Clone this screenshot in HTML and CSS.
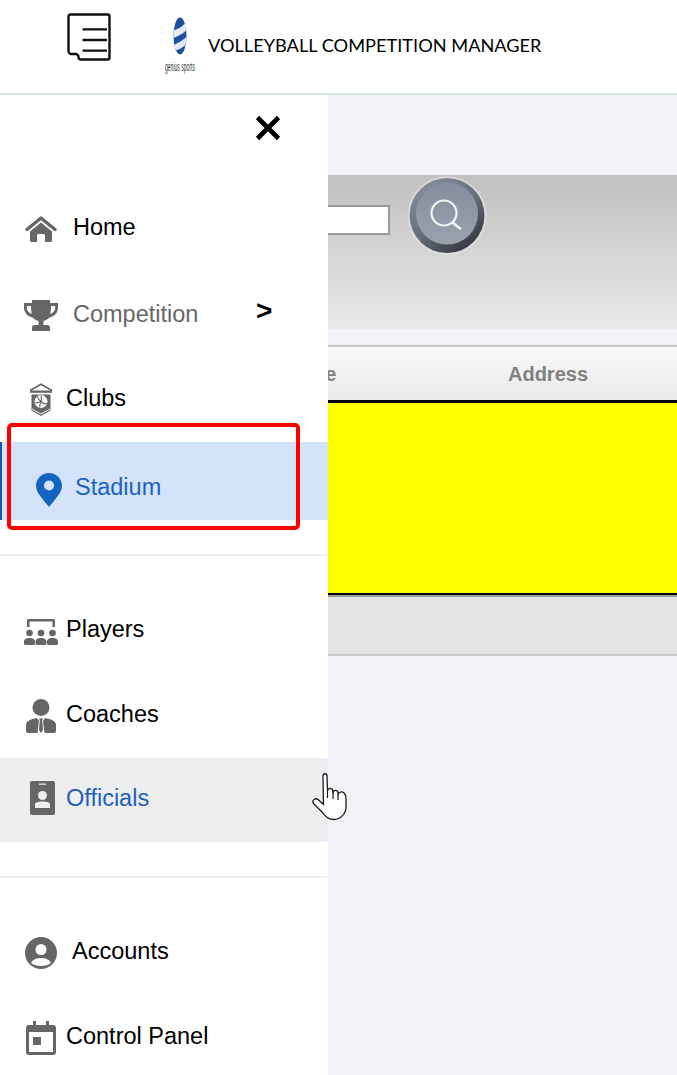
FILE: index.html
```html
<!DOCTYPE html>
<html lang="en">
<head>
<meta charset="utf-8">
<title>Volleyball Competition Manager</title>
<link rel="stylesheet" href="styles.css">
</head>
<body>
<header class="topbar">
  <svg class="burger" viewBox="0 0 44 48" aria-hidden="true">
    <path d="M3.500 1.500H40.500a2 2 0 0 1 2 2V44.500a2 2 0 0 1-2 2H14a2.500 2.500 0 0 1-2.500-2.500a3 3 0 0 0-3-3H4.500a3 3 0 0 1-3-3V3.500a2 2 0 0 1 2-2Z" fill="none" stroke="#111" stroke-width="2.400"/>
    <path d="M15.500 16.300H40M15.500 27H40M15.500 37.700H40" stroke="#111" stroke-width="2.300"/>
  </svg>
  <svg class="logo" viewBox="0 0 32 56" aria-hidden="true">
    <ellipse cx="16" cy="19" rx="6.500" ry="18.500" fill="#1f4fa0"/>
    <path d="M10 13C14 12.500 19 9 22 5.500L22.500 13C19 17 14 19 9.600 21ZM10 28C14 26 19 23 22.500 20L21.500 28C18 31 14 33 12 33.500Z" fill="#e4eaf3"/>
    <text x="1" y="54" font-size="12" textLength="30" lengthAdjust="spacingAndGlyphs" class="logo-text">genius sports</text>
  </svg>
  <span class="app-title">VOLLEYBALL COMPETITION MANAGER</span>
</header>

<div class="app">
  <main class="content">
    <section class="search-panel">
      <input class="search-input" type="text" aria-label="Search">
      <svg class="search-btn" viewBox="0 0 80 80" aria-hidden="true">
        <defs>
          <linearGradient id="ring" x1="0.200" y1="0.100" x2="0.800" y2="0.950">
            <stop offset="0" stop-color="#828b9b"/>
            <stop offset="0.500" stop-color="#666d79"/>
            <stop offset="1" stop-color="#33363c"/>
          </linearGradient>
          <linearGradient id="face" x1="0" y1="0" x2="0" y2="1">
            <stop offset="0" stop-color="#858e9e"/>
            <stop offset="1" stop-color="#9aa2af"/>
          </linearGradient>
        </defs>
        <circle cx="40" cy="40" r="39.500" fill="#dcdcdc"/>
        <circle cx="40" cy="39.500" r="37.500" fill="url(#ring)"/>
        <circle cx="40" cy="37.500" r="31" fill="url(#face)"/>
        <circle cx="37" cy="37" r="12.500" fill="none" stroke="#f4f4f4" stroke-width="2.200"/>
        <path d="M45.500 46.500L53 52.500" stroke="#f4f4f4" stroke-width="2.800" stroke-linecap="round"/>
      </svg>
    </section>
    <section class="grid">
      <div class="grid-head">
        <span></span>
        <span>Stadium Name</span>
        <span>Address</span>
      </div>
      <div class="grid-body"></div>
      <div class="grid-foot"></div>
    </section>
  </main>

  <aside class="drawer">
    <div class="drawer-top">
      <svg class="close" viewBox="0 0 26 26" aria-hidden="true"><path d="M2.500 2.500L23.500 23.500M23.500 2.500L2.500 23.500" stroke="#000" stroke-width="4.600"/></svg>
    </div>
    <nav>
      <a class="row row-home">
        <svg class="ico ico-home" viewBox="0 0 32 26" aria-hidden="true"><path d="M2 13.500L16 2L30 13.500" fill="none" stroke="#666" stroke-width="3.400" stroke-linecap="round" stroke-linejoin="round"/><path d="M16 6.500L27 15.500V24.500a1.500 1.500 0 0 1-1.500 1.500H20V19.500a1.500 1.500 0 0 0-1.500-1.500h-5A1.500 1.500 0 0 0 12 19.500V26H6.500A1.500 1.500 0 0 1 5 24.500V15.500Z" fill="#666"/></svg>
        <span class="label">Home</span>
      </a>
      <a class="row row-comp">
        <svg class="ico ico-trophy" viewBox="0 0 34 31" aria-hidden="true"><path d="M8 0H26V3H34V8C34 13.500 29 17 25.500 17.500C23.500 19.500 21.500 20.500 19.500 21V25H23.500C25 25 26 26 26 27.500V31H8V27.500C8 26 9 25 10.500 25H14.500V21C12.500 20.500 10.500 19.500 8.500 17.500C5 17 0 13.500 0 8V3H8ZM2.800 6V8C2.800 10.500 5 13 7.800 14C7.200 11.500 7 9 7 6ZM31.200 6H27C27 9 26.800 11.500 26.200 14C29 13 31.200 10.500 31.200 8Z" fill="#666"/></svg>
        <span class="label muted">Competition</span>
        <span class="chevron">&gt;</span>
      </a>
      <a class="row row-clubs">
        <svg class="ico ico-club" viewBox="0 0 24 34" aria-hidden="true"><path d="M1 7.500L12 1.200L23 7.500" fill="none" stroke="#666" stroke-width="1.700"/><path d="M1 7.500H23V9.800H1Z" fill="#666"/><path d="M2.500 11.500H21.500V27.500L12 33L2.500 27.500Z" fill="#666"/><path d="M3 26L12 31L21 26" fill="none" stroke="#fff" stroke-width="1"/><circle cx="12" cy="18.500" r="6.500" fill="#fff"/><path d="M12 12.500C12.500 15 12.500 17 12 18.500C10 19.500 8 20 6.200 19.500M12 18.500C13.500 20 16 21 18 20.500M12 18.500C11 20.500 10.500 22.500 11 24.500M8 13.800C9 15.500 10.500 17.500 12 18.500" fill="none" stroke="#666" stroke-width="1.100"/></svg>
        <span class="label">Clubs</span>
      </a>
      <a class="row row-active">
        <svg class="ico ico-pin" viewBox="0 0 26 34" aria-hidden="true"><path d="M13 0C5.800 0 0 5.700 0 12.800C0 20 8 27.500 13 34C18 27.500 26 20 26 12.800C26 5.700 20.200 0 13 0Z" fill="#1565c0"/><circle cx="13" cy="12.500" r="5" fill="#d2e3fa"/></svg>
        <span class="label link">Stadium</span>
        <span class="callout"></span>
      </a>
      <hr class="divider">
      <a class="row row-players">
        <svg class="ico ico-players" viewBox="0 0 34 27" aria-hidden="true"><path d="M3 9V2.500A1.500 1.500 0 0 1 4.500 1H29.500A1.500 1.500 0 0 1 31 2.500V9H28.500V3.500H5.500V9Z" fill="#666"/><g fill="#666"><circle cx="5.500" cy="15" r="3.300"/><circle cx="17" cy="15" r="3.300"/><circle cx="28.500" cy="15" r="3.300"/><path d="M0 25.500V24C0 21 2 20 5.500 20S11 21 11 24V25.500A1.500 1.500 0 0 1 9.500 27H1.500A1.500 1.500 0 0 1 0 25.500ZM11.500 25.500V24C11.500 21 13.500 20 17 20S22.500 21 22.500 24V25.500A1.500 1.500 0 0 1 21 27H13A1.500 1.500 0 0 1 11.500 25.500ZM23 25.500V24C23 21 25 20 28.500 20S34 21 34 24V25.500A1.500 1.500 0 0 1 32.500 27H24.500A1.500 1.500 0 0 1 23 25.500Z"/></g></svg>
        <span class="label">Players</span>
      </a>
      <a class="row row-coach">
        <svg class="ico ico-coach" viewBox="0 0 30 34" aria-hidden="true"><circle cx="15" cy="8.500" r="8.500" fill="#666"/><path d="M0 32V26C0 22 5 20 11 19L13 22L11.500 34H2A2 2 0 0 1 0 32ZM30 32V26C30 22 25 20 19 19L17 22L18.500 34H28A2 2 0 0 0 30 32ZM13 19.500H17L16.200 21.500L17 31L15 34L13 31L13.800 21.500Z" fill="#666"/></svg>
        <span class="label">Coaches</span>
      </a>
      <a class="row row-hover">
        <svg class="ico ico-badge" viewBox="0 0 25 34" aria-hidden="true"><path d="M2 0H23A2 2 0 0 1 25 2V32A2 2 0 0 1 23 34H2A2 2 0 0 1 0 32V2A2 2 0 0 1 2 0Z" fill="#666"/><path d="M9 2.500H16V3.800H9Z" fill="#eee"/><circle cx="12.500" cy="14.500" r="4.500" fill="#eee"/><path d="M5 27V23.500C5 21.500 7.500 20.500 12.500 20.500S20 21.500 20 23.500V27Z" fill="#eee"/></svg>
        <span class="label link">Officials</span>
      </a>
      <hr class="divider">
      <a class="row row-account">
        <svg class="ico ico-account" viewBox="0 0 32 32" aria-hidden="true"><circle cx="16" cy="16" r="16" fill="#666"/><circle cx="16" cy="12.500" r="5.500" fill="#fff"/><path d="M6 26C8 22 12 21 16 21S24 22 26 26C23.500 28 20 29 16 29S8.500 28 6 26Z" fill="#fff"/></svg>
        <span class="label">Accounts</span>
      </a>
      <a class="row row-panel">
        <svg class="ico ico-cal" viewBox="0 0 30 34" aria-hidden="true"><path d="M7 0H10V4H20V0H23V4H27A3 3 0 0 1 30 7V31A3 3 0 0 1 27 34H3A3 3 0 0 1 0 31V7A3 3 0 0 1 3 4H7ZM3 11V31H27V11Z" fill="#666"/><path d="M7 16H15V24H7Z" fill="#666"/></svg>
        <span class="label">Control Panel</span>
      </a>
    </nav>
  </aside>

  <svg class="hand" viewBox="0 0 40 52" aria-hidden="true">
    <path d="M13 6C13 3 17 3 17 6L17.500 21C18 17.500 22.500 17.500 22.800 21L23 23C23.500 19.500 27.500 19.500 28 23V25C28.500 22 32 21 34 23C35.500 24.500 36 26 36 28V37C36 44 30 49.500 24 49.500C17 49.500 15 45 11 41L3.500 33.500C1.500 30.500 5 27.500 8 29.500L13.500 34.500Z" fill="#fff" stroke="#1a1a1a" stroke-width="1.300" stroke-linejoin="round"/>
    <path d="M17.500 21V28M23 23V29M28 25V30" stroke="#1a1a1a" stroke-width="1.200" fill="none"/>
  </svg>
</div>
</body>
</html>
```

FILE: styles.css
```css
* { box-sizing: border-box; }
html, body { margin: 0; height: 100%; }
body {
  overflow: hidden;
  font-family: "Liberation Sans", Arial, sans-serif;
  background: #f2f3f8;
  display: flex;
  flex-direction: column;
}
.topbar {
  height: 95px;
  flex: none;
  background: #fff;
  border-bottom: 2px solid #d5e3e1;
  display: flex;
  align-items: flex-start;
  padding-left: 67px;
}
.burger { width: 44px; height: 48px; margin-top: 13px; flex: none; }
.logo { width: 32px; height: 56px; margin: 17px 0 0 53px; flex: none; overflow: visible; }
.logo-text { font-family: "Liberation Sans", sans-serif; fill: #333; }
.app-title {
  margin: 33px 0 0 12px;
  font-family: Lato, sans-serif;
  font-size: 18.200px;
  line-height: 24px;
  color: #000;
  white-space: nowrap;
}
.app { position: relative; flex: 1; min-height: 0; }
.content { padding-top: 80px; }
.search-panel {
  height: 154px;
  background: linear-gradient(#c0c0c0, #e9e9e9);
  display: flex;
  align-items: flex-start;
  padding-left: 100px;
}
.search-input {
  width: 290px;
  height: 30px;
  margin-top: 30px;
  border: 2px solid #999;
  background: #fff;
  padding: 0;
}
.search-btn { width: 80px; height: 80px; margin: 1px 0 0 17px; flex: none; }
.grid { margin-top: 16px; }
.grid-head {
  height: 58px;
  padding-top: 2px;
  border-top: 2px solid #c8c8c8;
  border-bottom: 3px solid #000;
  background: linear-gradient(#f9f9f9, #e9e9e9);
  display: grid;
  grid-template-columns: 115px 304px 1fr;
  align-items: center;
  text-align: center;
  font-size: 20px;
  font-weight: 700;
  color: #808080;
  white-space: nowrap;
}
.grid-body { height: 190px; background: #ff0; }
.grid-foot {
  height: 63px;
  border-top: 2px solid #000;
  background: #e4e4e4;
  box-shadow: inset 0 2px 0 #999;
  border-bottom: 2px solid #c8c8c8;
}
.drawer {
  position: absolute;
  left: 0; top: 0; bottom: 0;
  width: 328px;
  background: #fff;
  overflow: hidden;
}
.drawer-top {
  height: 90px;
  display: flex;
  justify-content: flex-end;
  align-items: flex-start;
  padding: 20px 47px 0 0;
}
.close { width: 26px; height: 26px; }
.row {
  display: flex;
  align-items: center;
  height: 84px;
  padding-left: 24px;
  font-size: 23.500px;
  color: #000;
  position: relative;
}
.label { line-height: 28px; white-space: nowrap; }
.muted { color: #666; }
.link { color: #1f5fbf; }
.chevron {
  position: absolute;
  left: 256px;
  top: 25px;
  font-weight: 700;
  font-size: 28px;
  line-height: 28px;
  color: #000;
}
.ico { flex: none; display: block; }
.ico-home { width: 32px; height: 26px; margin: 4px 16px 0 1px; }
.ico-trophy { width: 34px; height: 31px; margin: 3px 15px 0 0; }
.ico-club { width: 24px; height: 34px; margin: 4px 13px 0 5px; }
.ico-pin { width: 26px; height: 34px; margin: 6px 13px 0 12px; }
.ico-players { width: 34px; height: 27px; margin: 4px 8px 0 0; }
.ico-coach { width: 30px; height: 34px; margin: 4px 10px 0 2px; }
.ico-badge { width: 25px; height: 34px; margin: 0 11px 0 6px; }
.ico-account { width: 32px; height: 32px; margin: 4px 15px 0 1px; }
.ico-cal { width: 30px; height: 34px; margin: 4px 10px 0 2px; }
.row-home { margin-bottom: 3px; }
.row-active {
  height: 78px;
  margin-top: 2px;
  padding-top: 12px;
  background: #d2e3fa;
  box-shadow: inset 2px 0 0 #1a56b0;
}
.callout {
  position: absolute;
  left: 7px;
  top: -19px;
  width: 293px;
  height: 107px;
  border: 4px solid #f00;
  border-radius: 5px;
}
.divider { margin: 34px 0 31px; border: 0; height: 2px; background: #eee; }
.row-coach { margin-top: 1px; }
.row-hover { margin-top: 2px; background: #eee; padding-bottom: 4px; }
.row-panel { margin-top: 1px; }
.hand { position: absolute; left: 310px; top: 675px; width: 40px; height: 52px; }
```
